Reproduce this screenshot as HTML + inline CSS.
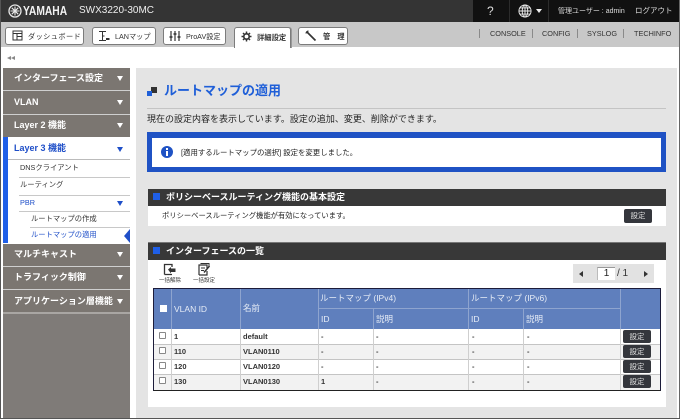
<!DOCTYPE html>
<html><head><meta charset="utf-8">
<style>
*{box-sizing:border-box}
html,body{margin:0;padding:0;width:680px;height:419px;overflow:hidden;background:#fff}
body{font-family:"Liberation Sans","Noto Sans CJK JP",sans-serif;position:relative;color:#222}
.a{position:absolute;white-space:nowrap}
.tab{position:absolute;top:27px;height:18px;background:#fff;border:1px solid #7c7c7c;border-radius:3px;font-size:7.2px;line-height:15px;color:#333;white-space:nowrap}
.tab span{position:absolute;top:1px}
.tab svg{position:absolute;top:2px}
.lnk{position:absolute;top:28px;font-size:7.3px;color:#333;line-height:11px}
.sep{position:absolute;top:29px;width:1px;height:9px;background:#8a8a8a}
.m{position:absolute;left:3px;width:127px;background:#7b7671;color:#fff;font-weight:bold;font-size:9px;padding-left:11px;white-space:nowrap}
.m i{position:absolute;left:114px;top:8px;width:0;height:0;border-left:3px solid transparent;border-right:3px solid transparent;border-top:5px solid #fff}
.s{position:absolute;font-size:7.3px;line-height:12px;color:#333;white-space:nowrap}
.ln{position:absolute;height:1px;background:#c8c8c8}
.bar{position:absolute;left:148px;width:518px;height:17px;background:#383838;color:#fff;font-weight:bold;font-size:9px;line-height:17px;padding-left:18px}
.bar:before{content:"";position:absolute;left:5px;top:4px;width:7px;height:7px;background:#1f5fe8}
.btn{position:absolute;background:#34363c;color:#ddd;font-size:7.5px;text-align:center;border-radius:2px}
.hc{position:absolute;color:#e6ecf6;font-size:8.5px;white-space:nowrap}
.vl{position:absolute;width:1px;background:#8ea4cf}
.td{position:absolute;font-size:7.5px;line-height:10px;color:#333;white-space:nowrap;font-weight:bold}
.cb{position:absolute;left:159px;width:7px;height:7px;background:#fff;border:1px solid #888;border-radius:1px}
.vg{position:absolute;width:1px;background:#cfcfcf;top:329px;height:61px}
</style></head><body>
<div class="a" style="left:0;top:0;width:473px;height:22px;background:#343434"></div>
<div class="a" style="left:473px;top:0;width:207px;height:22px;background:#111"></div>
<div class="a" style="left:509px;top:0;width:1px;height:22px;background:#2c2c2c"></div>
<div class="a" style="left:548px;top:0;width:1px;height:22px;background:#2c2c2c"></div>
<svg class="a" style="left:8px;top:4px" width="14" height="14" viewBox="0 0 14 14"><circle cx="7" cy="7" r="6" fill="none" stroke="#e8e8e8" stroke-width="1.3"/><path d="M7 2.5V11.5M2.5 7H11.5M3.8 3.8L10.2 10.2M10.2 3.8L3.8 10.2" stroke="#e8e8e8" stroke-width="1.1"/></svg>
<div class="a" style="left:23px;top:2px;font-size:13px;font-weight:bold;color:#f2f2f2;line-height:18px;transform:scaleX(.79);transform-origin:left">YAMAHA</div>
<div class="a" style="left:79px;top:4px;font-size:10px;color:#eee;line-height:13px">SWX3220-30MC</div>
<div class="a" style="left:487px;top:3px;font-size:12px;color:#ddd;line-height:16px">?</div>
<svg class="a" style="left:518px;top:4px" width="14" height="14" viewBox="0 0 15 15" fill="none" stroke="#eee" stroke-width="1"><circle cx="7.5" cy="7.5" r="6.5"/><ellipse cx="7.5" cy="7.5" rx="3" ry="6.5"/><path d="M1 7.5H14M2 4.2H13M2 10.8H13M7.5 1V14"/></svg>
<div class="a" style="left:536px;top:9px;width:0;height:0;border-left:3px solid transparent;border-right:3px solid transparent;border-top:4px solid #eee"></div>
<div class="a" style="left:558px;top:6px;font-size:7px;color:#ddd;line-height:11px">管理ユーザー : admin</div>
<div class="a" style="left:635px;top:5px;font-size:7.5px;color:#ddd;line-height:12px">ログアウト</div>

<div class="a" style="left:0;top:22px;width:680px;height:25px;background:#c8c8c8"></div>
<div class="tab" style="left:5px;width:79px"><svg style="left:6px" width="11" height="11" viewBox="0 0 11 11" fill="none" stroke="#333"><rect x="1" y="1" width="9" height="9"/><path d="M1 3.5H10M5 3.5V10M5 6.5H10"/></svg><span style="left:22px;letter-spacing:.4px">ダッシュボード</span></div>
<div class="tab" style="left:92px;width:64px"><svg style="left:5px" width="12" height="12" viewBox="0 0 12 12" fill="none" stroke="#333"><path d="M1 1.5H8M4.500 1.5V10M1 10.500H8M4.500 6H6.500"/><path d="M8 9H11.500" stroke-width="2"/></svg><span style="left:22px">LANマップ</span></div>
<div class="tab" style="left:163px;width:63px"><svg style="left:5px" width="12" height="12" viewBox="0 0 12 12" fill="none" stroke="#333"><path d="M2 1V11M6 1V11M10 1V11" stroke-width="1.200"/><path d="M.5 7H3.500M4.500 4H7.500M8.500 7H11.500" stroke-width="1.600"/></svg><span style="left:22px">ProAV設定</span></div>
<div class="tab" style="left:234px;width:57px;height:21px;border-bottom:0;border-radius:3px 3px 0 0;font-weight:bold;box-shadow:1px 0 0 #999"><svg style="left:6px;top:3px" width="11" height="11" viewBox="0 0 11 11"><circle cx="5.500" cy="5.500" r="2.700" fill="none" stroke="#333" stroke-width="1.600"/><path d="M5.500 .5V2.500M5.500 8.500V10.500M.5 5.500H2.500M8.500 5.500H10.500M2 2L3.400 3.400M7.600 7.600L9 9M9 2L7.600 3.400M3.400 7.600L2 9" stroke="#333" stroke-width="1.500"/></svg><span style="left:22px;top:2px;font-size:7.300px">詳細設定</span></div>
<div class="tab" style="left:298px;width:50px"><svg style="left:6px" width="12" height="12" viewBox="0 0 12 12" fill="none" stroke="#333"><path d="M1.500 1.500L3.500 3.500L10.500 10.500" stroke-width="1.700"/><path d="M1 3.500A3 3 0 0 1 3.500 1" stroke-width="1.200"/></svg><span style="left:24px;font-weight:bold">管　理</span></div>
<div class="sep" style="left:479px"></div><div class="lnk" style="left:490px">CONSOLE</div>
<div class="sep" style="left:532px"></div><div class="lnk" style="left:542px">CONFIG</div>
<div class="sep" style="left:577px"></div><div class="lnk" style="left:587px">SYSLOG</div>
<div class="sep" style="left:623px"></div><div class="lnk" style="left:634px">TECHINFO</div>
<div class="a" style="left:7px;top:56px;width:0;height:0;border-top:2.500px solid transparent;border-bottom:2.500px solid transparent;border-right:4px solid #888"></div>
<div class="a" style="left:11px;top:56px;width:0;height:0;border-top:2.500px solid transparent;border-bottom:2.500px solid transparent;border-right:4px solid #888"></div>

<div class="a" style="left:3px;top:68px;width:127px;height:351px;background:#7f7b78"></div>
<div class="m" style="top:68px;height:22px;line-height:20px">インターフェース設定<i></i></div>
<div class="a" style="left:3px;top:90px;width:127px;height:1px;background:#cfcfcf"></div>
<div class="m" style="top:91px;height:23px;line-height:22px">VLAN<i style="top:9px"></i></div>
<div class="a" style="left:3px;top:114px;width:127px;height:1px;background:#cfcfcf"></div>
<div class="m" style="top:115px;height:22px;line-height:21px">Layer 2 機能<i></i></div>
<div class="a" style="left:3px;top:137px;width:127px;height:107px;background:#fff"></div>
<div class="a" style="left:3px;top:137px;width:5px;height:106px;background:#1f5fe8"></div>
<div class="a" style="left:14px;top:141px;font-size:9px;font-weight:bold;color:#1f4fc8;line-height:14px">Layer 3 機能</div>
<div class="a" style="left:117px;top:147px;width:0;height:0;border-left:3px solid transparent;border-right:3px solid transparent;border-top:5px solid #1f4fc8"></div>
<div class="ln" style="left:8px;top:159px;width:122px;background:#bbb"></div>
<div class="s" style="left:20px;top:162px">DNSクライアント</div>
<div class="ln" style="left:19px;top:177px;width:111px"></div>
<div class="s" style="left:20px;top:179px">ルーティング</div>
<div class="ln" style="left:19px;top:195px;width:111px"></div>
<div class="s" style="left:20px;top:197px;color:#1f4fc8">PBR</div>
<div class="a" style="left:117px;top:201px;width:0;height:0;border-left:3px solid transparent;border-right:3px solid transparent;border-top:5px solid #1f4fc8"></div>
<div class="ln" style="left:19px;top:211px;width:111px"></div>
<div class="s" style="left:31px;top:213px">ルートマップの作成</div>
<div class="ln" style="left:30px;top:227px;width:100px"></div>
<div class="s" style="left:31px;top:229px;color:#1f4fc8">ルートマップの適用</div>
<div class="a" style="left:124px;top:229px;width:0;height:0;border-top:7px solid transparent;border-bottom:7px solid transparent;border-right:6px solid #1f4fc8"></div>
<div class="m" style="top:244px;height:22px;line-height:20px">マルチキャスト<i></i></div>
<div class="a" style="left:3px;top:266px;width:127px;height:1px;background:#cfcfcf"></div>
<div class="m" style="top:267px;height:22px;line-height:20px">トラフィック制御<i></i></div>
<div class="a" style="left:3px;top:289px;width:127px;height:1px;background:#cfcfcf"></div>
<div class="m" style="top:290px;height:22px;line-height:22px">アプリケーション層機能<i style="top:9px"></i></div>
<div class="a" style="left:3px;top:312px;width:127px;height:2px;background:#a9a6a3"></div>

<div class="a" style="left:136px;top:68px;width:541px;height:351px;background:#e4e4e4"></div>
<div class="a" style="left:151px;top:87px;width:6px;height:6px;background:#333"></div>
<div class="a" style="left:147px;top:91px;width:5px;height:5px;background:#1f5fd8"></div>
<div class="a" style="left:164px;top:82px;font-size:13px;font-weight:bold;color:#1f5fd8;line-height:18px">ルートマップの適用</div>
<div class="a" style="left:147px;top:108px;width:519px;height:1px;background:#c4c4c4"></div>
<div class="a" style="left:147px;top:113px;font-size:9px;color:#222;line-height:13px">現在の設定内容を表示しています。設定の追加、変更、削除ができます。</div>
<div class="a" style="left:147px;top:132px;width:519px;height:40px;background:#fff;border:5px solid #1f52c4;border-top-width:6px"></div>
<svg class="a" style="left:161px;top:146px" width="12" height="12" viewBox="0 0 12 12"><circle cx="6" cy="6" r="6" fill="#1f52c4"/><rect x="5" y="2" width="2" height="2" fill="#fff"/><rect x="5" y="5" width="2" height="5" fill="#fff"/></svg>
<div class="a" style="left:181px;top:147px;font-size:7.400px;color:#222;line-height:11px">[適用するルートマップの選択] 設定を変更しました。</div>

<div class="bar" style="top:189px">ポリシーベースルーティング機能の基本設定</div>
<div class="a" style="left:148px;top:206px;width:518px;height:20px;background:#fff"></div>
<div class="a" style="left:162px;top:210px;font-size:7.300px;color:#222;line-height:12px">ポリシーベースルーティング機能が有効になっています。</div>
<div class="btn" style="left:624px;top:209px;width:28px;height:14px;line-height:14px">設定</div>

<div class="bar" style="top:242px;border-top:1px solid #777;height:18px;line-height:16px">インターフェースの一覧</div>
<div class="a" style="left:148px;top:260px;width:518px;height:147px;background:#fff"></div>
<svg class="a" style="left:163px;top:263px" width="14" height="13" viewBox="0 0 14 13" fill="none" stroke="#333"><path d="M1.500 11.500V1.500H9V4M1.500 11.500H9" stroke-width="1.300"/><path d="M5 6.500L8 4V5.500H12.500V9H8V10.500Z" fill="#333" stroke="none"/></svg>
<svg class="a" style="left:197px;top:262px" width="14" height="14" viewBox="0 0 14 14" fill="none" stroke="#333"><path d="M2 13V3H10V6M2 13H10V9" stroke-width="1.200"/><path d="M3.500 1.500H12V5" /><path d="M4 6H8M4 8.500H7" /><path d="M7 10.500L12.500 4" stroke-width="1.500"/></svg>
<div class="a" style="left:159px;top:277px;font-size:5.500px;color:#333;line-height:8px">一括解除</div>
<div class="a" style="left:193px;top:277px;font-size:5.500px;color:#333;line-height:8px">一括設定</div>

<div class="a" style="left:573px;top:264px;width:81px;height:19px;background:#e2e2e2"></div>
<div class="a" style="left:579px;top:271px;width:0;height:0;border-top:3px solid transparent;border-bottom:3px solid transparent;border-right:4px solid #333"></div>
<div class="a" style="left:644px;top:271px;width:0;height:0;border-top:3px solid transparent;border-bottom:3px solid transparent;border-left:4px solid #333"></div>
<div class="a" style="left:597px;top:267px;width:18px;height:13px;background:#fff;border-top:1px solid #999;border-left:1px solid #bbb;font-size:10px;line-height:12px;text-align:center;color:#222">1</div>
<div class="a" style="left:617px;top:267px;font-size:10px;line-height:13px;color:#333">/ 1</div>

<div class="a" style="left:153px;top:288px;width:508px;height:103px;background:#fff;border:1px solid #1c1c3a;border-bottom:1px solid #222"></div>
<div class="a" style="left:154px;top:289px;width:506px;height:40px;background:#5f7fbd"></div>
<div class="vl" style="left:171px;top:289px;height:40px"></div>
<div class="vl" style="left:240px;top:289px;height:40px"></div>
<div class="vl" style="left:318px;top:289px;height:40px"></div>
<div class="vl" style="left:373px;top:309px;height:20px"></div>
<div class="vl" style="left:468px;top:289px;height:40px"></div>
<div class="vl" style="left:523px;top:309px;height:20px"></div>
<div class="vl" style="left:620px;top:289px;height:40px"></div>
<div class="a" style="left:318px;top:308px;width:302px;height:1px;background:#8ea4cf"></div>
<div class="a" style="left:160px;top:305px;width:7px;height:7px;background:#fff"></div>
<div class="hc" style="left:174px;top:303px;line-height:12px">VLAN ID</div>
<div class="hc" style="left:243px;top:302px;line-height:13px">名前</div>
<div class="hc" style="left:320px;top:292px;line-height:13px">ルートマップ (IPv4)</div>
<div class="hc" style="left:471px;top:292px;line-height:13px">ルートマップ (IPv6)</div>
<div class="hc" style="left:321px;top:313px;line-height:12px">ID</div>
<div class="hc" style="left:376px;top:313px;line-height:12px">説明</div>
<div class="hc" style="left:471px;top:313px;line-height:12px">ID</div>
<div class="hc" style="left:526px;top:313px;line-height:12px">説明</div>

<div class="a" style="left:154px;top:344px;width:506px;height:15px;background:#f2f2f2"></div>
<div class="a" style="left:154px;top:375px;width:506px;height:15px;background:#f2f2f2"></div>
<div class="a" style="left:154px;top:344px;width:506px;height:1px;background:#c4c4c4"></div>
<div class="a" style="left:154px;top:359px;width:506px;height:1px;background:#c4c4c4"></div>
<div class="a" style="left:154px;top:374px;width:506px;height:1px;background:#c4c4c4"></div>
<div class="vg" style="left:171px"></div><div class="vg" style="left:240px"></div><div class="vg" style="left:318px"></div><div class="vg" style="left:373px"></div><div class="vg" style="left:468px"></div><div class="vg" style="left:523px"></div><div class="vg" style="left:620px"></div>

<div class="cb" style="top:332px"></div><div class="cb" style="top:347px"></div><div class="cb" style="top:362px"></div><div class="cb" style="top:377px"></div>
<div class="td" style="left:174px;top:332px">1</div><div class="td" style="left:243px;top:332px">default</div>
<div class="td" style="left:174px;top:347px">110</div><div class="td" style="left:243px;top:347px">VLAN0110</div>
<div class="td" style="left:174px;top:362px">120</div><div class="td" style="left:243px;top:362px">VLAN0120</div>
<div class="td" style="left:174px;top:377px">130</div><div class="td" style="left:243px;top:377px">VLAN0130</div>

<div class="td" style="left:321px;top:332px">-</div><div class="td" style="left:376px;top:332px">-</div><div class="td" style="left:472px;top:332px">-</div><div class="td" style="left:527px;top:332px">-</div>
<div class="td" style="left:321px;top:347px">-</div><div class="td" style="left:376px;top:347px">-</div><div class="td" style="left:472px;top:347px">-</div><div class="td" style="left:527px;top:347px">-</div>
<div class="td" style="left:321px;top:362px">-</div><div class="td" style="left:376px;top:362px">-</div><div class="td" style="left:472px;top:362px">-</div><div class="td" style="left:527px;top:362px">-</div>
<div class="td" style="left:321px;top:377px">1</div><div class="td" style="left:376px;top:377px">-</div><div class="td" style="left:472px;top:377px">-</div><div class="td" style="left:527px;top:377px">-</div>

<div class="btn" style="left:623px;top:330px;width:28px;height:13px;line-height:13px">設定</div>
<div class="btn" style="left:623px;top:345px;width:28px;height:13px;line-height:13px">設定</div>
<div class="btn" style="left:623px;top:360px;width:28px;height:13px;line-height:13px">設定</div>
<div class="btn" style="left:623px;top:375px;width:28px;height:13px;line-height:13px">設定</div>

<div class="a" style="left:0;top:0;width:1px;height:419px;background:#555"></div>
<div class="a" style="left:679px;top:0;width:1px;height:419px;background:#666"></div>
<div class="a" style="left:0;top:418px;width:680px;height:1px;background:#555"></div>
</body></html>
